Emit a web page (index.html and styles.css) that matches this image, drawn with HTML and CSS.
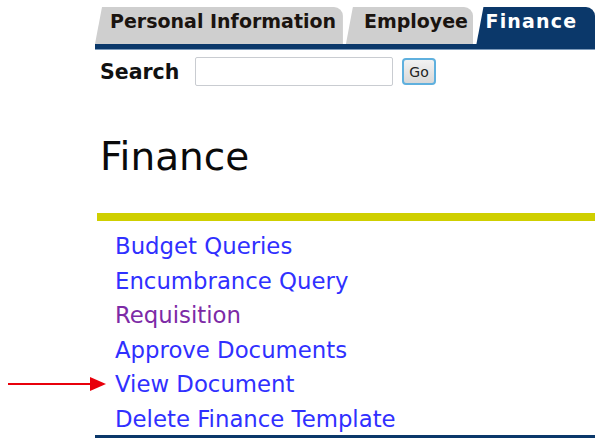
FILE: index.html
```html
<!DOCTYPE html>
<html>
<head>
<meta charset="utf-8">
<link rel="stylesheet" href="styles.css">
</head>
<body>
<div class="page">
  <nav class="tabs">
    <a class="tab tab-personal">Personal Information</a>
    <a class="tab tab-employee">Employee</a>
    <a class="tab tab-finance active">Finance</a>
  </nav>
  <form class="search">
    <label class="search-label">Search</label>
    <input class="search-input" type="text">
    <button class="go" type="button">Go</button>
  </form>
  <h1 class="title">Finance</h1>
  <div class="rule"></div>
  <ul class="menu">
    <li><a href="#">Budget Queries</a></li>
    <li><a href="#">Encumbrance Query</a></li>
    <li><a href="#" class="visited">Requisition</a></li>
    <li><a href="#">Approve Documents</a></li>
    <li class="pointed"><a href="#">View Document</a>
      <svg class="pointer" width="100" height="16" viewBox="0 0 100 16">
        <line x1="0" y1="8" x2="84" y2="8" stroke="#e8000b" stroke-width="2"/>
        <polygon points="82,1 98,8 82,15" fill="#e8000b"/>
      </svg>
    </li>
    <li><a href="#">Delete Finance Template</a></li>
  </ul>
  <div class="bottom-rule"></div>
</div>
</body>
</html>
```
FILE: styles.css
```css
html, body {
  margin: 0;
  padding: 0;
  background: #fff;
}
body {
  font-family: "DejaVu Sans", Verdana, sans-serif;
  width: 595px;
  height: 438px;
  overflow: hidden;
}
.page {
  margin-left: 95px;
  padding-top: 7px;
}

/* tab strip */
.tabs {
  display: flex;
  align-items: flex-end;
  height: 37px;
  border-bottom: 5px solid #0b386a;
  box-shadow: 0 1px 0 #7e9bbb;
}
.tab {
  display: flex;
  align-items: center;
  height: 37px;
  box-sizing: border-box;
  font-weight: bold;
  font-size: 19px;
  color: #1a1410;
  background: #cfcfcf;
  border-top-right-radius: 9px;
  clip-path: polygon(7px 0, 100% 0, 100% 100%, 0 100%);
  padding-bottom: 10px;
  white-space: nowrap;
}
.tab-personal {
  width: 251px;
  padding-left: 15px;
}
.tab-employee {
  width: 129px;
  margin-left: 3px;
  padding-left: 18px;
}
.tab-finance {
  width: 120px;
  margin-left: 3px;
  padding-left: 9px;
  letter-spacing: 1.2px;
}
.tab.active {
  background: #0b386a;
  color: #fff;
}

/* search row */
.search {
  display: flex;
  align-items: center;
  margin: 8px 0 0 5px;
  height: 29px;
}
.search-label {
  font-weight: bold;
  font-size: 20.5px;
  color: #111;
  width: 95px;
}
.search-input {
  width: 198px;
  height: 29px;
  box-sizing: border-box;
  border: 1px solid #c9ccd1;
  border-radius: 2px;
  margin: 0;
}
.go {
  margin-left: 9px;
  width: 34px;
  height: 27px;
  box-sizing: border-box;
  font-family: "DejaVu Sans", Verdana, sans-serif;
  font-size: 14px;
  color: #222;
  padding: 0;
  border: 2px solid #5fb0de;
  border-radius: 4px;
  background: linear-gradient(#f2f2f2, #d8d8d8);
}

/* page heading */
.title {
  margin: 48px 0 0 5px;
  font-weight: normal;
  font-size: 39px;
  line-height: 46px;
  color: #0a0a0a;
}
.rule {
  margin: 33px 0 0 2px;
  height: 8px;
  background: #cfcf00;
}

/* link list */
.menu {
  list-style: none;
  margin: 8px 0 0 0;
  padding: 0 0 0 20px;
}
.menu li {
  position: relative;
  font-size: 22.8px;
  line-height: 34.6px;
  height: 34.6px;
  white-space: nowrap;
}
.menu li:last-child {
  height: 32.6px;
}
.menu a {
  color: #3030ff;
  text-decoration: none;
}
.menu a.visited {
  color: #7d2aa6;
}
.pointer {
  position: absolute;
  left: -107px;
  top: 9px;
}
.bottom-rule {
  height: 3px;
  background: #0b386a;
}
```
